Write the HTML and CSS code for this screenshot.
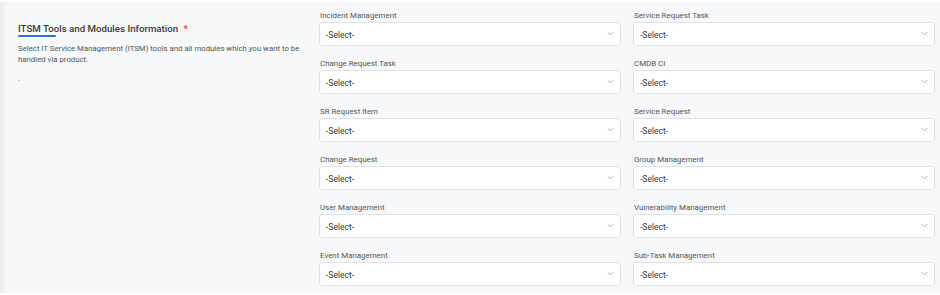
FILE: index.html
```html
<!DOCTYPE html>
<html lang="en">
<head>
<meta charset="utf-8">
<title>ITSM Tools and Modules Information</title>
<link rel="stylesheet" href="styles.css">
</head>
<body>

<div class="page">
  <div class="intro">
    <h2 class="title">ITSM Tools and Modules Information <span class="req">*</span></h2>
    <div class="underline"></div>
    <p class="desc">Select IT Service Management (ITSM) tools and all modules which you want to be handled via product.</p>
    <p class="dot">.</p>
  </div>

  <div class="fields">
    <div class="field">
      <label>Incident Management</label>
      <div class="select"><span>-Select-</span><svg class="chev" viewBox="0 0 8 5"><path d="M1 1l3 3 3-3"/></svg></div>
    </div>
    <div class="field">
      <label>Service Request Task</label>
      <div class="select"><span>-Select-</span><svg class="chev" viewBox="0 0 8 5"><path d="M1 1l3 3 3-3"/></svg></div>
    </div>
    <div class="field">
      <label>Change Request Task</label>
      <div class="select"><span>-Select-</span><svg class="chev" viewBox="0 0 8 5"><path d="M1 1l3 3 3-3"/></svg></div>
    </div>
    <div class="field">
      <label>CMDB CI</label>
      <div class="select"><span>-Select-</span><svg class="chev" viewBox="0 0 8 5"><path d="M1 1l3 3 3-3"/></svg></div>
    </div>
    <div class="field">
      <label>SR Request Item</label>
      <div class="select"><span>-Select-</span><svg class="chev" viewBox="0 0 8 5"><path d="M1 1l3 3 3-3"/></svg></div>
    </div>
    <div class="field">
      <label>Service Request</label>
      <div class="select"><span>-Select-</span><svg class="chev" viewBox="0 0 8 5"><path d="M1 1l3 3 3-3"/></svg></div>
    </div>
    <div class="field">
      <label>Change Request</label>
      <div class="select"><span>-Select-</span><svg class="chev" viewBox="0 0 8 5"><path d="M1 1l3 3 3-3"/></svg></div>
    </div>
    <div class="field">
      <label>Group Management</label>
      <div class="select"><span>-Select-</span><svg class="chev" viewBox="0 0 8 5"><path d="M1 1l3 3 3-3"/></svg></div>
    </div>
    <div class="field">
      <label>User Management</label>
      <div class="select"><span>-Select-</span><svg class="chev" viewBox="0 0 8 5"><path d="M1 1l3 3 3-3"/></svg></div>
    </div>
    <div class="field">
      <label>Vulnerability Management</label>
      <div class="select"><span>-Select-</span><svg class="chev" viewBox="0 0 8 5"><path d="M1 1l3 3 3-3"/></svg></div>
    </div>
    <div class="field">
      <label>Event Management</label>
      <div class="select"><span>-Select-</span><svg class="chev" viewBox="0 0 8 5"><path d="M1 1l3 3 3-3"/></svg></div>
    </div>
    <div class="field">
      <label>Sub-Task Management</label>
      <div class="select"><span>-Select-</span><svg class="chev" viewBox="0 0 8 5"><path d="M1 1l3 3 3-3"/></svg></div>
    </div>
  </div>
</div>

</body>
</html>
```

FILE: styles.css
```css
html, body {
  margin: 0;
  padding: 0;
}
body {
  font-family: Roboto, 'Liberation Sans', sans-serif;
  background: #fff;
  color: #333;
}
.page {
  display: flex;
  height: 291px;
  margin-top: 2px;
  background: #f7f8fa;
  box-shadow: inset 6px 0 6px -4px rgba(0,0,0,0.08);
}
.intro {
  width: 301px;
  padding: 20px 0 0 18px;
}
.title {
  margin: 0;
  font-size: 9.7px;
  font-weight: 500;
  line-height: 14px;
  color: #3a3a3a;
}
.req {
  color: #e0352b;
  margin-left: 3px;
}
.underline {
  width: 38px;
  height: 2px;
  background: #2f6fde;
  margin-top: -1px;
  border-radius: 1px;
}
.desc {
  margin: 6px 0 0;
  font-size: 7.8px;
  line-height: 11px;
  color: #555;
}
.dot {
  margin: 8px 0 0;
  font-size: 8px;
  line-height: 12px;
  color: #777;
}
.fields {
  display: grid;
  grid-template-columns: 302px 302px;
  column-gap: 12px;
  row-gap: 12px;
  padding-top: 8px;
  align-content: start;
}
.field label {
  display: block;
  font-size: 7.9px;
  line-height: 11px;
  color: #555;
  margin: 0 0 1px 1px;
}
.select {
  height: 22px;
  border: 1px solid #dfe1e5;
  border-radius: 3px;
  background: #fff;
  display: flex;
  align-items: center;
  justify-content: space-between;
  padding: 0 6px 0 6px;
  font-size: 8.5px;
  color: #333;
}
.select span {
  margin-top: 2px;
}
.chev {
  width: 7px;
  height: 5px;
  fill: none;
  stroke: #9a9a9a;
  stroke-width: 1;
  margin-top: -2px;
}
```
